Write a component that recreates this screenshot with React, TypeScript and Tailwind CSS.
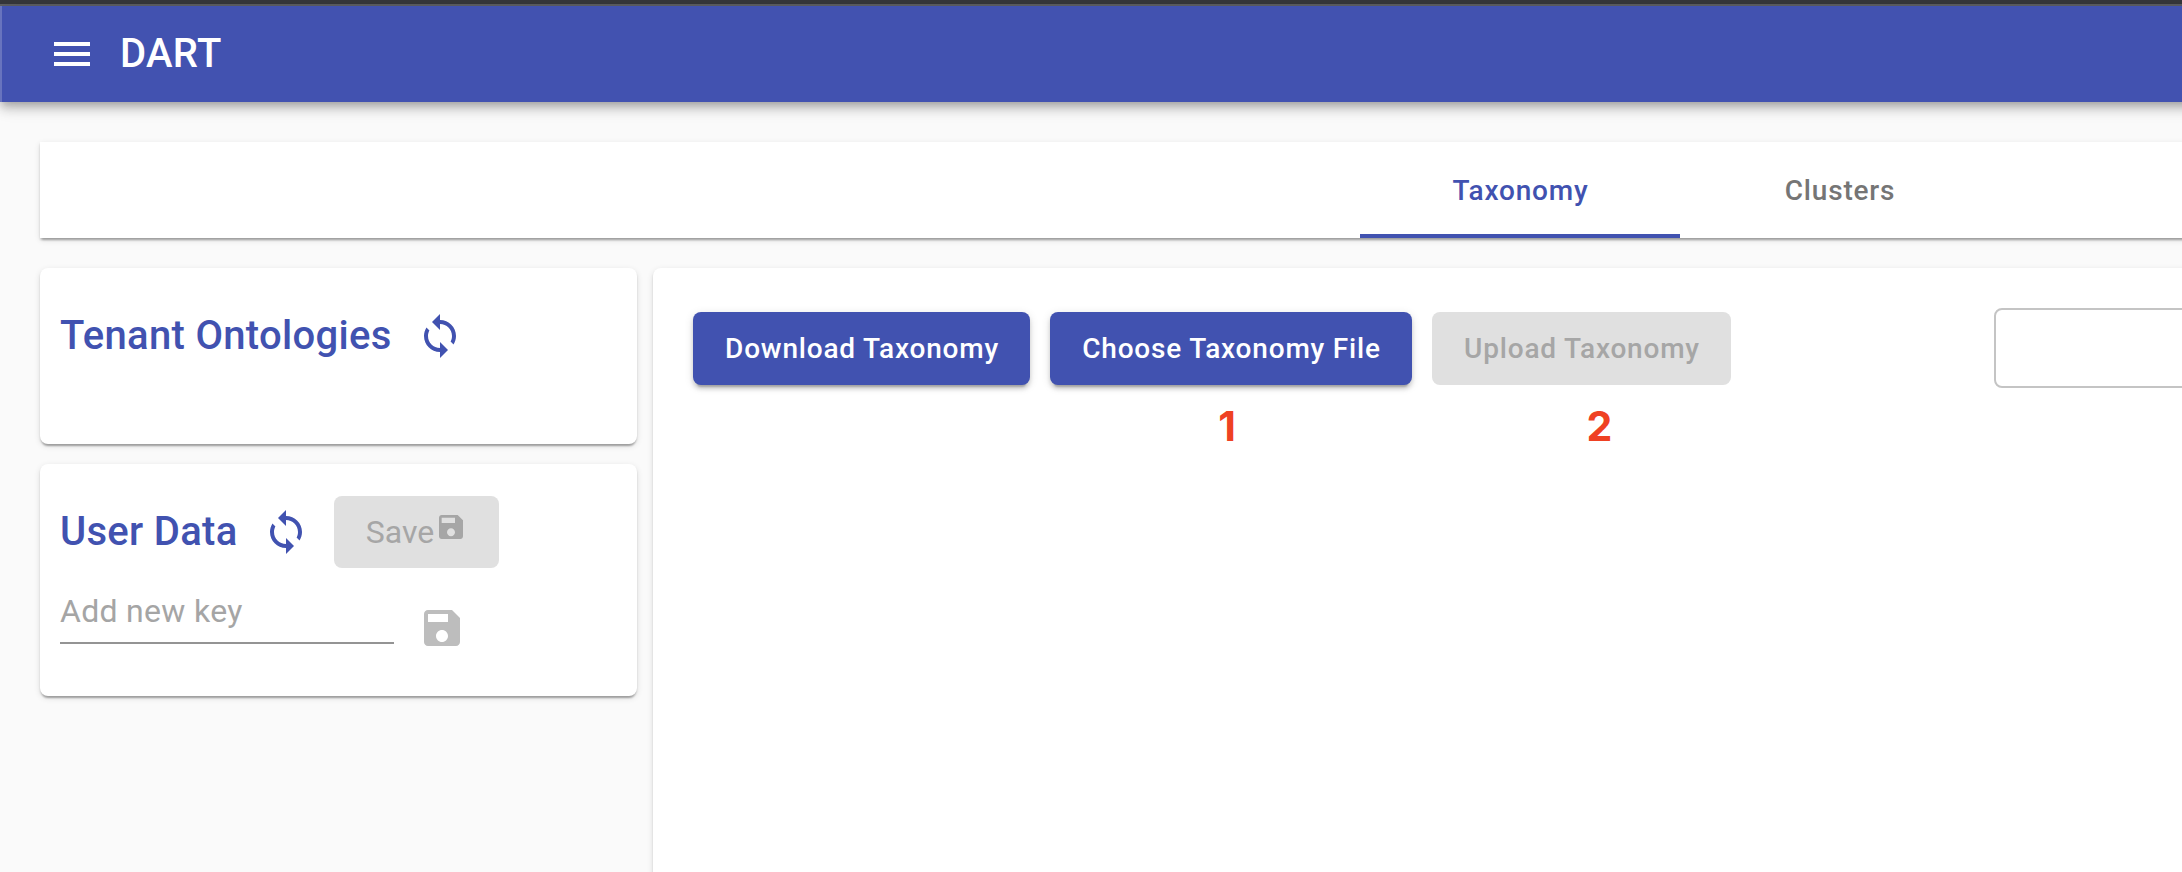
import type { ReactNode } from "react";

const cardShadow =
  "shadow-[0_4px_2px_-2px_rgba(0,0,0,0.2),0_2px_2px_0_rgba(0,0,0,0.14),0_2px_6px_0_rgba(0,0,0,0.12)]";
const buttonShadow =
  "shadow-[0_6px_2px_-4px_rgba(0,0,0,0.2),0_4px_4px_0_rgba(0,0,0,0.14),0_2px_10px_0_rgba(0,0,0,0.12)]";

function Icon({ d, className }: { d: string; className: string }) {
  return (
    <svg viewBox="0 0 24 24" fill="currentColor" className={`shrink-0 ${className}`}>
      <path d={d} />
    </svg>
  );
}

const menuPath = "M3 18h18v-2H3v2zm0-5h18v-2H3v2zm0-7v2h18V6H3z";
const syncPath =
  "M12 4V1L8 5l4 4V6c3.31 0 6 2.69 6 6 0 1.01-.25 1.97-.7 2.8l1.46 1.46C19.54 15.03 20 13.57 20 12c0-4.42-3.58-8-8-8zm0 14c-3.31 0-6-2.69-6-6 0-1.01.25-1.97.7-2.8L5.24 7.74C4.46 8.97 4 10.43 4 12c0 4.42 3.58 8 8 8v3l4-4-4-4v3z";
const savePath =
  "M17 3H5c-1.11 0-2 .9-2 2v14c0 1.1.89 2 2 2h14c1.1 0 2-.9 2-2V7l-4-4zm-5 16c-1.66 0-3-1.34-3-3s1.34-3 3-3 3 1.34 3 3-1.34 3-3 3zm3-10H5V5h10v4z";

function ActionButton({ children, className }: { children: ReactNode; className: string }) {
  return (
    <button
      className={`flex h-[73px] shrink-0 items-center justify-center rounded-lg pl-px text-[28px] font-medium tracking-[0.8px] whitespace-nowrap ${className}`}
    >
      {children}
    </button>
  );
}

function Heading({ children }: { children: ReactNode }) {
  return (
    <h2 className="text-[40px] leading-[48px] font-medium tracking-[0.3px] whitespace-nowrap text-[#4152b0]">
      {children}
    </h2>
  );
}

function StepNumber({ children, className }: { children: ReactNode; className: string }) {
  return (
    <span
      className={`mt-[17px] text-center font-['Inter',sans-serif] text-[41px] leading-[48px] font-bold text-[#ef4123] ${className}`}
    >
      {children}
    </span>
  );
}

export default function App() {
  return (
    <div className="flex h-[872px] w-[2182px] flex-col overflow-hidden bg-[#fafafa] font-['Roboto',sans-serif]">
      <div className="h-1 shrink-0 bg-[#36373b]" />
      <div className="h-0.5 shrink-0 bg-[#5f6064]" />
      <header className="-mr-10 flex h-24 shrink-0 items-center border-l-2 border-[#6874be] bg-[#4252b0] pl-[46px] text-white shadow-[0_4px_8px_-2px_rgba(0,0,0,0.2),0_8px_10px_0_rgba(0,0,0,0.14),0_2px_20px_0_rgba(0,0,0,0.12)]">
        <Icon d={menuPath} className="size-12" />
        <h1 className="ml-6 text-[40px] leading-[64px] font-medium tracking-[0.3px]">DART</h1>
      </header>

      <nav
        className={`mt-10 -mr-10 ml-10 flex h-24 shrink-0 bg-white pl-[1320px] text-[28px] font-medium tracking-[0.8px] ${cardShadow}`}
      >
        <div className="flex w-80 items-center justify-center border-b-4 border-[#4152b0] pt-1.5 pl-px text-[#4152b0]">
          Taxonomy
        </div>
        <div className="flex w-80 items-center justify-center pt-0.5 text-[#757575]">Clusters</div>
      </nav>

      <main className="mt-[30px] -mr-10 ml-10 flex h-[604px] shrink-0 gap-4">
        <aside className="flex w-[597px] shrink-0 flex-col gap-5">
          <section className={`h-44 rounded-lg bg-white pt-11 pl-5 ${cardShadow}`}>
            <div className="flex items-center">
              <div className="w-[356px]">
                <Heading>Tenant Ontologies</Heading>
              </div>
              <Icon d={syncPath} className="size-12 text-[#4152b0]" />
            </div>
          </section>

          <section className={`h-[232px] rounded-lg bg-white pt-8 pl-5 ${cardShadow}`}>
            <div className="flex items-center">
              <div className="w-[202px]">
                <Heading>User Data</Heading>
              </div>
              <Icon d={syncPath} className="size-12 text-[#4152b0]" />
              <button className="ml-6 flex h-[72px] w-[165px] items-center rounded-lg bg-[#e0e0e0] pl-[31px] text-[32px] text-[#a6a6a6]">
                <span className="w-[70px]">Save</span>
                <Icon d={savePath} className="mb-[10px] size-8" />
              </button>
            </div>
            <div className="mt-3 flex">
              <input
                placeholder="Add new key"
                className="h-16 w-[334px] border-b-2 border-[#949494] text-[32px] tracking-[0.3px] outline-none placeholder:text-[#a5a5a5]"
              />
              <Icon d={savePath} className="mt-6 ml-6 size-12 text-[#bdbdbd]" />
            </div>
          </section>
        </aside>

        <section className={`h-[640px] flex-1 rounded-tl-lg bg-white pt-10 pl-10 ${cardShadow}`}>
          <div className="flex h-20">
            <div className="flex gap-5 pt-1">
              <ActionButton className={`w-[337px] bg-[#4152b0] text-white ${buttonShadow}`}>
                Download Taxonomy
              </ActionButton>
              <div className="flex w-[362px] flex-col">
                <ActionButton className={`w-full bg-[#4152b0] text-white ${buttonShadow}`}>
                  Choose Taxonomy File
                </ActionButton>
                <StepNumber className="pr-2">1</StepNumber>
              </div>
              <div className="flex w-[299px] flex-col">
                <ActionButton className="w-full bg-[#e0e0e0] text-[#a6a6a6]">
                  Upload Taxonomy
                </ActionButton>
                <StepNumber className="pl-[36px]">2</StepNumber>
              </div>
            </div>
            <input className="ml-[263px] h-20 w-[500px] shrink-0 rounded-lg border-2 border-[#c4c4c4] outline-none" />
          </div>
        </section>
      </main>
    </div>
  );
}
